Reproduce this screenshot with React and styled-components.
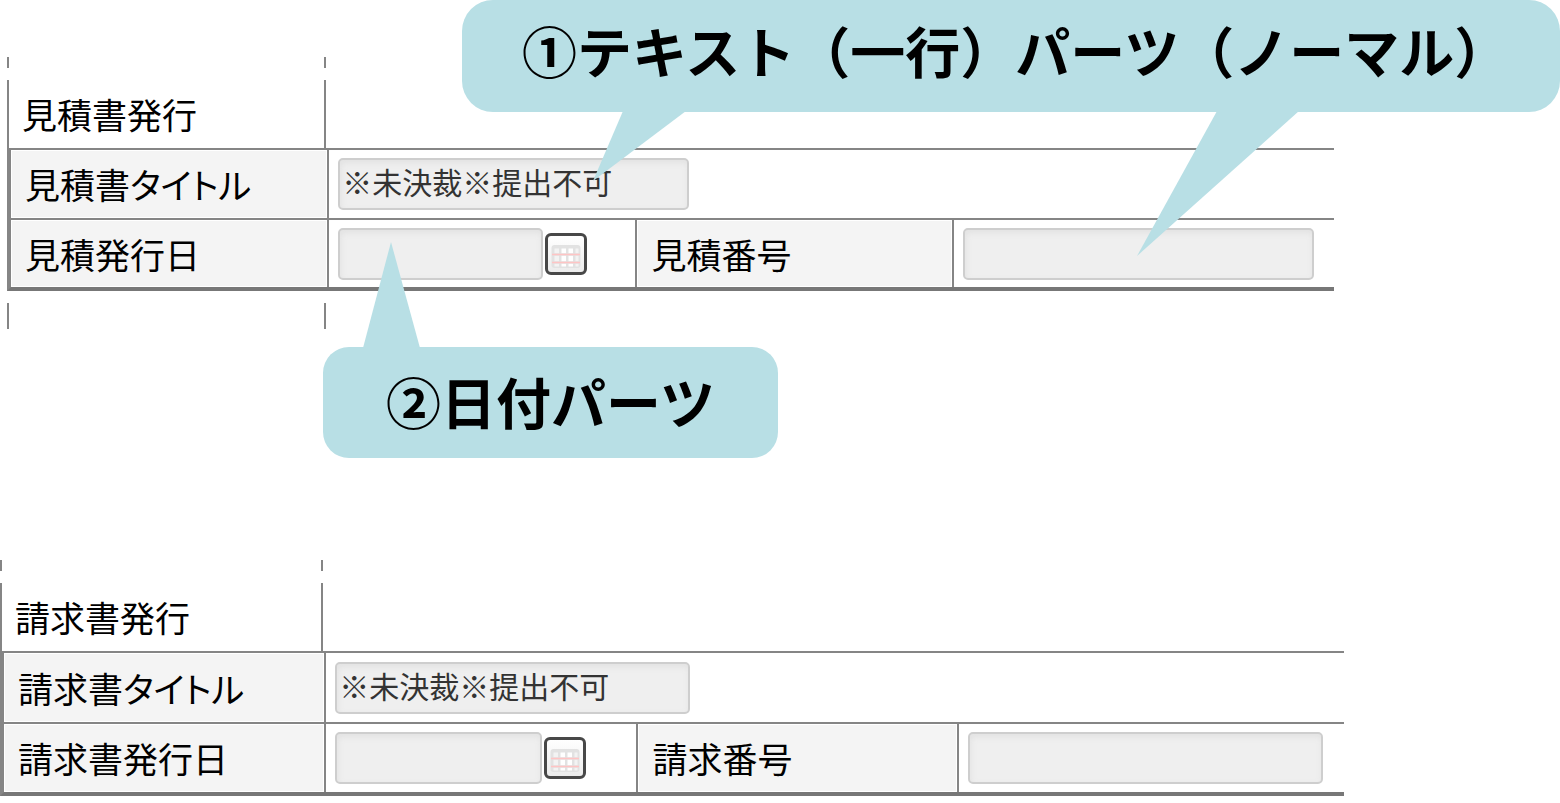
import { useState } from "react";
import styled, { createGlobalStyle } from "styled-components";

const LINE = "#858585";
const CALLOUT = "#b8dfe5";

export default function App() {
    return (
        <>
            <GlobalStyle />
            <Page>
                <IssueForm
                    id="estimate"
                    heading="見積書発行"
                    titleLabel="見積書タイトル"
                    dateLabel="見積発行日"
                    numberLabel="見積番号"
                    indent={7}
                    trailing={226}
                    rowHeight={70}
                    fieldWidth={351}
                    dateWidth={205}
                    closing
                />
                <IssueForm
                    id="invoice"
                    heading="請求書発行"
                    titleLabel="請求書タイトル"
                    dateLabel="請求書発行日"
                    numberLabel="請求番号"
                    indent={0}
                    trailing={216}
                    rowHeight={71}
                    fieldWidth={355}
                    dateWidth={207}
                />
                <TextCallout>
                    <Tail width="706" height="145" viewBox="0 0 706 145">
                        <polygon points="30,0 93,0 0,70" />
                        <polygon points="624,0 706,0 544,145" />
                    </Tail>
                    ①テキスト（一行）パーツ（ノーマル）
                </TextCallout>
                <DateCallout>
                    <DateTail width="57" height="106" viewBox="0 0 57 106">
                        <polygon points="0,106 28,0 57,106" />
                    </DateTail>
                    ②日付パーツ
                </DateCallout>
            </Page>
        </>
    );
}

const IssueForm = ({
    id,
    heading,
    titleLabel,
    dateLabel,
    numberLabel,
    indent,
    trailing,
    rowHeight,
    fieldWidth,
    dateWidth,
    closing,
}) => {
    const [form, setForm] = useState({
        title: "※未決裁※提出不可",
        date: "",
        number: "",
    });

    const handleChange = (e) => {
        setForm({ ...form, [e.target.name]: e.target.value });
    };

    return (
        <Section $indent={indent} $trailing={trailing}>
            <Rule $height={11} aria-hidden="true">
                <span />
                <span />
            </Rule>
            <div>
                <HeadingRow $height={68}>
                    <Heading>{heading}</Heading>
                    <span />
                </HeadingRow>
                <FormTable>
                    <colgroup>
                        <LabelCol />
                        <DateCol />
                        <LabelCol />
                        <col />
                    </colgroup>
                    <tbody>
                        <Row $height={rowHeight}>
                            <LabelCell scope="row" $tight>
                                <label htmlFor={`${id}-title`}>{titleLabel}</label>
                            </LabelCell>
                            <FieldCell colSpan={3}>
                                <Field
                                    id={`${id}-title`}
                                    name="title"
                                    type="text"
                                    readOnly
                                    $width={fieldWidth}
                                    value={form.title}
                                    onChange={handleChange}
                                />
                            </FieldCell>
                        </Row>
                        <Row $height={rowHeight - 1}>
                            <LabelCell scope="row">
                                <label htmlFor={`${id}-date`}>{dateLabel}</label>
                            </LabelCell>
                            <FieldCell>
                                <DateGroup>
                                    <Field
                                        id={`${id}-date`}
                                        name="date"
                                        type="text"
                                        readOnly
                                        $width={dateWidth}
                                        value={form.date}
                                        onChange={handleChange}
                                    />
                                    <CalendarButton type="button" aria-label={dateLabel}>
                                        <CalendarIcon />
                                    </CalendarButton>
                                </DateGroup>
                            </FieldCell>
                            <LabelCell scope="row">
                                <label htmlFor={`${id}-number`}>{numberLabel}</label>
                            </LabelCell>
                            <FieldCell>
                                <Field
                                    id={`${id}-number`}
                                    name="number"
                                    type="text"
                                    readOnly
                                    $width={fieldWidth}
                                    value={form.number}
                                    onChange={handleChange}
                                />
                            </FieldCell>
                        </Row>
                    </tbody>
                </FormTable>
            </div>
            {closing && (
                <Rule $height={26} aria-hidden="true">
                    <span />
                    <span />
                </Rule>
            )}
        </Section>
    );
};

const CalendarIcon = () => (
    <svg width="30" height="24" viewBox="0 0 30 24" fill="none">
        <rect x="0.5" y="1" width="29" height="23" rx="3" fill="#e2e2e2" />
        <path d="M3.5 4.5h4.5v18H3.5zM24.5 4.5h3v18h-3z" fill="#f3f3f3" />
        <path d="M10.5 4.5h4.5v18h-4.5zM17.5 4.5h4.5v18h-4.5z" fill="#fff" />
        <path d="M3 10.5h25M3 18.5h25" stroke="#e2e2e2" strokeWidth="2.5" />
        <path d="M1 10.5h28M1 18.5h28" stroke="#ffc4c4" strokeWidth="1.5" />
    </svg>
);

const GlobalStyle = createGlobalStyle`
  *, *::before, *::after {
    box-sizing: border-box;
  }

  body {
    margin: 0;
    background: #fff;
    color: #000;
    font-family: "Noto Sans CJK JP", sans-serif;
  }
`;

const Page = styled.main`
  position: relative;
  display: flex;
  flex-direction: column;
  gap: 231px;
  padding: 57px 0 6px;
`;

const Section = styled.section`
  display: flex;
  flex-direction: column;
  gap: 12px;
  margin: 0 ${({ $trailing }) => $trailing}px 0 ${({ $indent }) => $indent}px;
`;

const Rule = styled.div`
  display: grid;
  grid-template-columns: 23.9% 1fr;
  height: ${({ $height }) => $height}px;

  span {
    border-left: 2px solid ${LINE};
  }
`;

const HeadingRow = styled(Rule)`
  line-height: 68px;
`;

const Heading = styled.h2`
  margin: 0;
  padding-left: 13px;
  border-left: 2px solid ${LINE};
  font-size: 35px;
  font-weight: 400;
  white-space: nowrap;
`;

const FormTable = styled.table`
  width: 100%;
  table-layout: fixed;
  border-collapse: separate;
  border-spacing: 0;
  border-left: 4px solid ${LINE};
  border-bottom: 4px solid #777;
`;

const LabelCol = styled.col`
  width: 23.9%;
`;

const DateCol = styled.col`
  width: 23.3%;
`;

const Row = styled.tr`
  height: ${({ $height }) => $height}px;
`;

const LabelCell = styled.th`
  padding: 0 0 0 14px;
  border-top: 2px solid ${LINE};
  background: #f4f4f4;
  box-shadow: inset 0 0 0 1px #fff;
  font-size: 35px;
  font-weight: 400;
  line-height: 52px;
  font-feature-settings: ${({ $tight }) => ($tight ? '"palt"' : "normal")};
  text-align: left;
  white-space: nowrap;

  td + & {
    border-left: 2px solid ${LINE};
  }
`;

const FieldCell = styled.td`
  padding: 0 0 0 9px;
  border-top: 2px solid ${LINE};
  border-left: 2px solid ${LINE};
`;

const DateGroup = styled.div`
  display: flex;
  align-items: center;
  gap: 2px;
`;

const Field = styled.input`
  display: block;
  width: ${({ $width }) => $width}px;
  height: 52px;
  padding: 0 2px 6px;
  border: 2px solid #cecece;
  border-radius: 5px;
  background: #efefef;
  box-shadow: inset 1px 3px 6px #e2e2e2;
  color: #333;
  font-family: inherit;
  font-size: 30px;
  outline: none;
`;

const CalendarButton = styled.button`
  display: flex;
  align-items: center;
  justify-content: center;
  width: 42px;
  height: 42px;
  padding: 4px 0 0;
  border: 3px solid #484848;
  border-radius: 6px;
  background: linear-gradient(#fff, #ececec);
  cursor: pointer;
`;

const Callout = styled.div`
  position: absolute;
  background: ${CALLOUT};
  font-size: 55px;
  font-weight: 700;
  white-space: nowrap;
`;

const TextCallout = styled(Callout)`
  top: 0;
  left: 462px;
  right: 0;
  height: 112px;
  padding-left: 60px;
  border-radius: 31px;
  line-height: 98px;
`;

const DateCallout = styled(Callout)`
  top: 347px;
  left: 323px;
  height: 111px;
  padding: 0 63px;
  border-radius: 26px;
  line-height: 107px;
`;

/* pico de los globos, apunta hacia los campos */
const Tail = styled.svg`
  position: absolute;
  top: 111px;
  left: 131px;
  fill: ${CALLOUT};
`;

const DateTail = styled(Tail)`
  top: -105px;
  left: 40px;
`;
